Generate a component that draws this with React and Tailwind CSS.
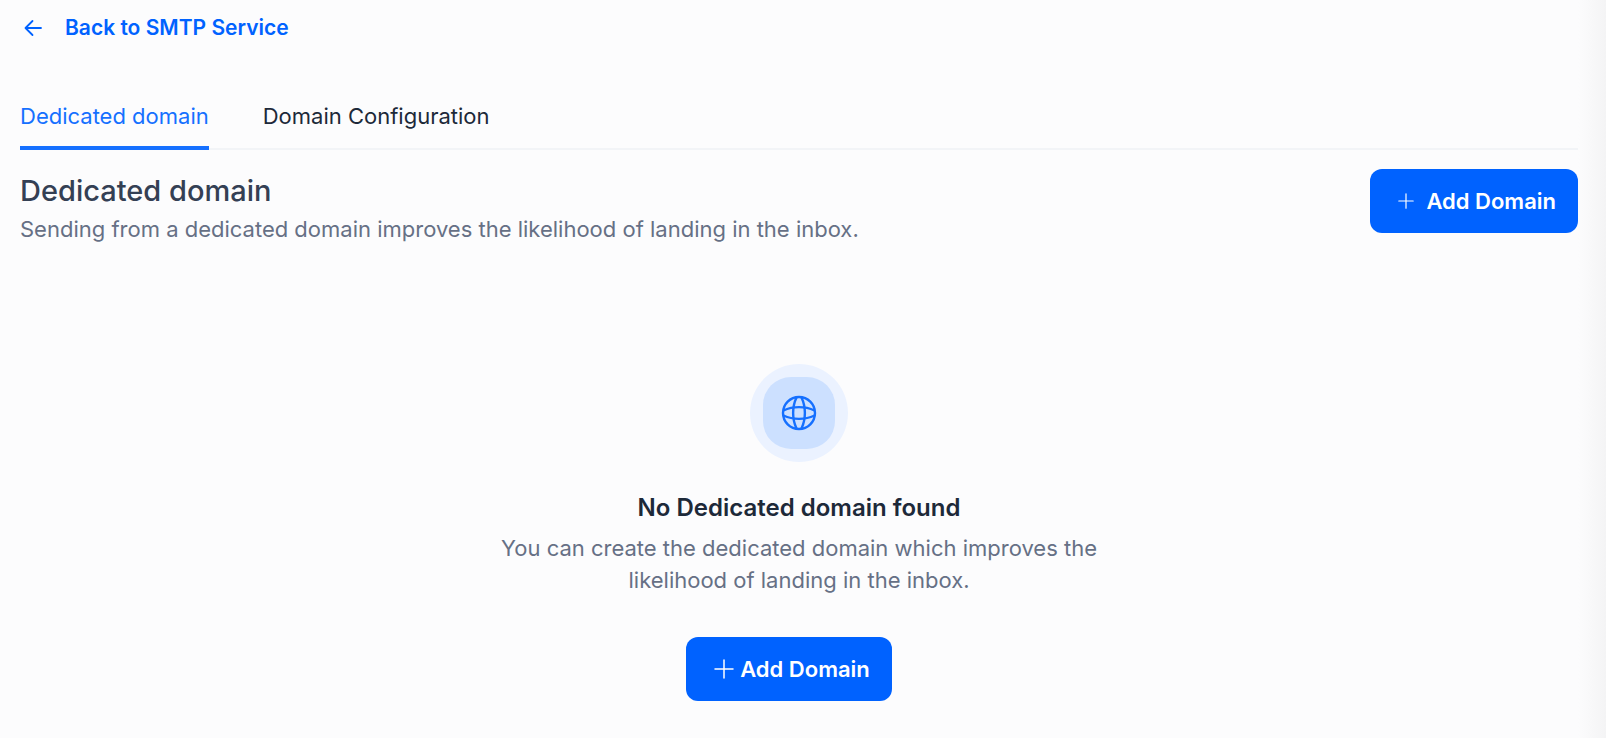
import React from "react";

function ArrowLeftIcon() {
  return (
    <svg viewBox="0 0 24 24" className="size-6" fill="none" stroke="currentColor" strokeWidth="1.8" strokeLinecap="round" strokeLinejoin="round" aria-hidden="true">
      <path d="M20 12H5M11.5 5L4.5 12l7 7" />
    </svg>
  );
}

function PlusIcon({ className }) {
  return (
    <svg viewBox="0 0 20 20" className={className} fill="none" stroke="currentColor" strokeWidth="1.5" strokeLinecap="round" aria-hidden="true">
      <path d="M10 1v18M1 10h18" />
    </svg>
  );
}

function GlobeIcon() {
  return (
    <svg viewBox="0 0 36 36" className="size-9" fill="none" stroke="currentColor" strokeWidth="2.4" aria-hidden="true">
      <circle cx="18" cy="18" r="16" />
      <path d="M15.5 2.5C11 12 11 24 15.5 33.500M20.500 2.500C25 12 25 24 20.500 33.500" />
      <path d="M2.500 15.500C12 11 24 11 33.500 15.500M2.500 20.500C12 25 24 25 33.500 20.500" />
    </svg>
  );
}

export default function App() {
  return (
    <div className="flex min-h-screen bg-[#fcfcfd] font-['Inter','Liberation_Sans',sans-serif] text-[22px] leading-8">
      <main className="min-w-0 flex-1 pt-3 pl-5">
        <a href="#smtp" className="flex w-fit items-center gap-5 pl-px text-[21px] font-semibold text-[#0062ff]">
          <ArrowLeftIcon />
          Back to SMTP Service
        </a>

        <nav className="mt-10 flex gap-[54px] border-b-2 border-[#f2f4f7]">
          <a href="#dedicated" aria-current="page" className="-mb-0.5 border-b-4 border-[#1570ff] pt-4 pb-3.5 text-[#1570ff]">
            Dedicated domain
          </a>
          <a href="#configuration" className="pt-4 text-[#1d2939]">
            Domain Configuration
          </a>
        </nav>

        <header className="flex items-start justify-between pt-[19px]">
          <div>
            <h1 className="text-[29px] leading-11 font-medium text-[#344054]">Dedicated domain</h1>
            <p className="text-[#667085]">
              Sending from a dedicated domain improves the likelihood of landing in the inbox.
            </p>
          </div>
          <button type="button" className="flex h-16 items-center gap-3 rounded-xl bg-[#0062ff] pr-[22px] pl-7 font-semibold text-white">
            <PlusIcon className="size-4" />
            Add Domain
          </button>
        </header>

        <section className="flex flex-col items-center pt-[119px] pb-9 text-center">
          <div className="flex size-[98px] items-center justify-center rounded-full bg-[#ebf2ff]">
            <div className="flex size-[72px] items-center justify-center rounded-[28px] bg-[#cce0ff] text-[#1570ff]">
              <GlobeIcon />
            </div>
          </div>
          <h2 className="mt-[30px] text-[24px] font-semibold text-[#1d2939]">No Dedicated domain found</h2>
          <p className="mt-2 max-w-[600px] text-[#667085]">
            You can create the dedicated domain which improves the likelihood of landing in the inbox.
          </p>
          <button type="button" className="mt-[41px] mr-5 flex h-16 items-center gap-1.5 rounded-xl bg-[#0062ff] pr-[22px] pl-7 font-semibold text-white">
            <PlusIcon className="size-5" />
            Add Domain
          </button>
        </section>
      </main>
      <div className="w-7 shrink-0 bg-linear-to-r from-[#fcfcfd] to-[#f4f4f5]" />
    </div>
  );
}
